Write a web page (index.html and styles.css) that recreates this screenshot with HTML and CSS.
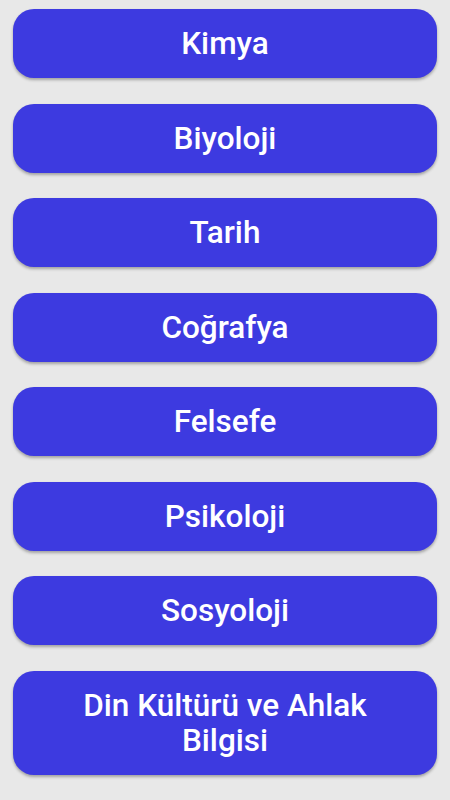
FILE: index.html
```html
<!DOCTYPE html>
<html lang="tr">
<head>
  <meta charset="UTF-8" />
  <meta name="viewport" content="width=device-width, initial-scale=1.0" />
  <title>Dersler</title>
  <link rel="stylesheet" href="styles.css">
</head>
<body>
  <main class="ders-listesi">
    <button class="ders-btn">Kimya</button>
    <button class="ders-btn">Biyoloji</button>
    <button class="ders-btn">Tarih</button>
    <button class="ders-btn">Coğrafya</button>
    <button class="ders-btn">Felsefe</button>
    <button class="ders-btn">Psikoloji</button>
    <button class="ders-btn">Sosyoloji</button>
    <button class="ders-btn">Din Kültürü ve Ahlak Bilgisi</button>
  </main>
</body>
</html>
```

FILE: styles.css
```css
/* Genel sayfa */
body {
  margin: 0;
  background-color: #e8e8e8;
  font-family: Roboto, "Noto Sans", sans-serif;
}

/* Ders butonlari listesi */
.ders-listesi {
  display: flex;
  flex-direction: column;
  gap: 25.5px;
  padding: 9px 13px;
}

.ders-btn {
  display: block;
  width: 100%;
  padding: 17px 40px;
  border: none;
  border-radius: 21px;
  background-color: #3d3ae0;
  color: #fff;
  font-family: inherit;
  font-size: 31.5px;
  font-weight: 500;
  line-height: 35px;
  text-align: center;
  box-shadow: 0 2px 3px rgba(0, 0, 0, 0.3);
  cursor: pointer;
}
```
